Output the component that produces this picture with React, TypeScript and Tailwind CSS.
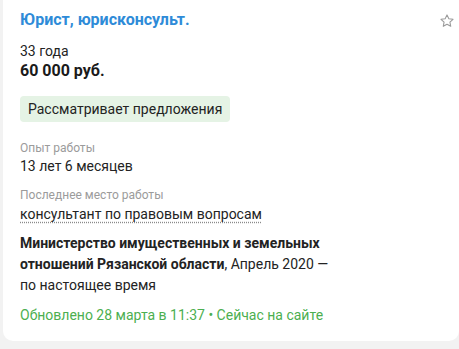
export default function App() {
  return (
    <div className="min-h-[349px] bg-[#f2f2f2] pl-[3px] font-['Roboto',sans-serif]">
      <div className="relative h-[341px] rounded-b-[10px] bg-white pl-[17px] pr-4 pt-[9px]">
        <svg
          className="absolute right-[4px] top-[13px]"
          width="16"
          height="16"
          viewBox="0 0 24 24"
          fill="none"
          stroke="#9a9a9a"
          strokeWidth="1.6"
          strokeLinejoin="round"
        >
          <path d="M12 2.8l2.75 5.8 6.3.8-4.65 4.35 1.2 6.25L12 16.9 6.4 20l1.2-6.25L2.95 9.4l6.3-.8z" />
        </svg>
        <div className="text-[16px] font-bold leading-[22px] text-[#2e8bd8]">Юрист, юрисконсульт.</div>
        <div className="mt-[10px] text-[14px] leading-[20px] text-[#232323]">33 года</div>
        <div className="text-[16px] font-bold leading-[20px] text-[#1a1a1a]">60 000 руб.</div>
        <div className="mt-[15px] inline-flex h-[26px] items-center rounded-[4px] bg-[#e5f3e5] px-[8px] text-[14px] text-[#232323]">
          Рассматривает предложения
        </div>
        <div className="mt-[18px] text-[12px] leading-[16px] text-[#9b9b9b]">Опыт работы</div>
        <div className="text-[14px] leading-[20px] text-[#232323]">13 лет 6 месяцев</div>
        <div className="mt-[11px] text-[12px] leading-[16px] text-[#9b9b9b]">Последнее место работы</div>
        <div className="mt-[1px] text-[14px] leading-[20px] text-[#232323]">
          <span className="underline decoration-dotted decoration-[#8a8a8a] underline-offset-[3px]">
            консультант по правовым вопросам
          </span>
        </div>
        <div className="mt-[9px] w-[322px] text-[14px] leading-[21px] text-[#232323]">
          <span className="font-bold">Министерство имущественных и земельных отношений Рязанской области</span>,
          Апрель 2020 — по настоящее время
        </div>
        <div className="mt-[9px] text-[14px] leading-[20px] text-[#4caf50]">
          Обновлено 28 марта в 11:37 • Сейчас на сайте
        </div>
      </div>
    </div>
  );
}
